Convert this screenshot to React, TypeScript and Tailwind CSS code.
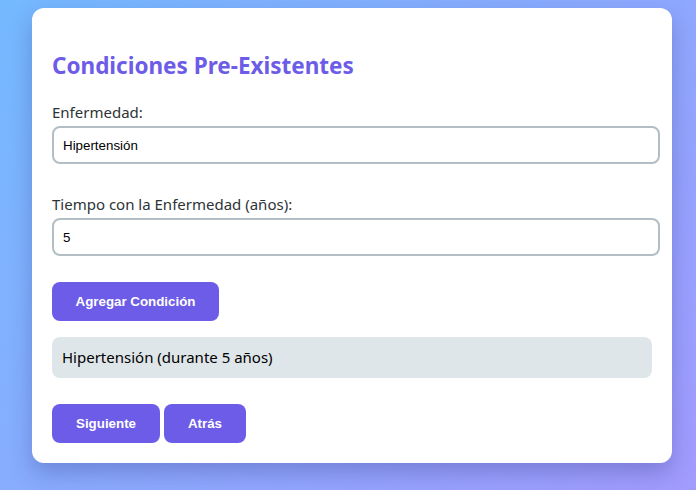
import React from "react";

const App = () => {
  return (
    <div className="min-h-screen w-full bg-[linear-gradient(135deg,#74b9ff,#a29bfe)] pl-[32px] pt-[8px] pb-[27px]">
      <div
        className="w-[640px] rounded-[12px] bg-white px-[20px] pt-[20px] pb-[20px] shadow-[0_10px_22px_rgba(40,40,120,0.28)]"
        style={{ fontFamily: '"Segoe UI", "Noto Sans", sans-serif' }}
      >
        <h2 className="mt-[22px] text-[22.5px] leading-[32px] font-bold text-[#6c5ce7]">
          Condiciones Pre-Existentes
        </h2>

        <label className="mt-[18px] block text-[15px] leading-[24px] text-[#2d3436]">
          Enfermedad:
        </label>
        <input
          defaultValue="Hipertensión"
          className="mt-[2px] block h-[38px] w-[608px] rounded-[8px] border-2 border-[#b2bec3] px-[9px] text-[13.33px] text-black outline-none"
          style={{ fontFamily: '"Liberation Sans", Arial, sans-serif' }}
        />

        <label className="mt-[28px] block text-[15px] leading-[24px] text-[#2d3436]">
          Tiempo con la Enfermedad (años):
        </label>
        <input
          defaultValue="5"
          className="mt-[2px] block h-[38px] w-[608px] rounded-[8px] border-2 border-[#b2bec3] px-[9px] text-[13.33px] text-black outline-none"
          style={{ fontFamily: '"Liberation Sans", Arial, sans-serif' }}
        />

        <button
          className="mt-[26px] block h-[39px] w-[167px] rounded-[8px] bg-[#6c5ce7] text-[13.33px] font-bold text-white"
          style={{ fontFamily: '"Liberation Sans", Arial, sans-serif' }}
        >
          Agregar Condición
        </button>

        <ul className="mt-[16px]">
          <li className="flex h-[41px] items-center rounded-[8px] bg-[#dfe6e9] px-[10px] text-[15px] text-black">
            Hipertensión (durante 5 años)
          </li>
        </ul>

        <div
          className="mt-[26px] flex gap-[4px]"
          style={{ fontFamily: '"Liberation Sans", Arial, sans-serif' }}
        >
          <button className="h-[39px] w-[108px] rounded-[8px] bg-[#6c5ce7] text-[13.33px] font-bold text-white">
            Siguiente
          </button>
          <button className="h-[39px] w-[82px] rounded-[8px] bg-[#6c5ce7] text-[13.33px] font-bold text-white">
            Atrás
          </button>
        </div>
      </div>
    </div>
  );
};

export default App;
